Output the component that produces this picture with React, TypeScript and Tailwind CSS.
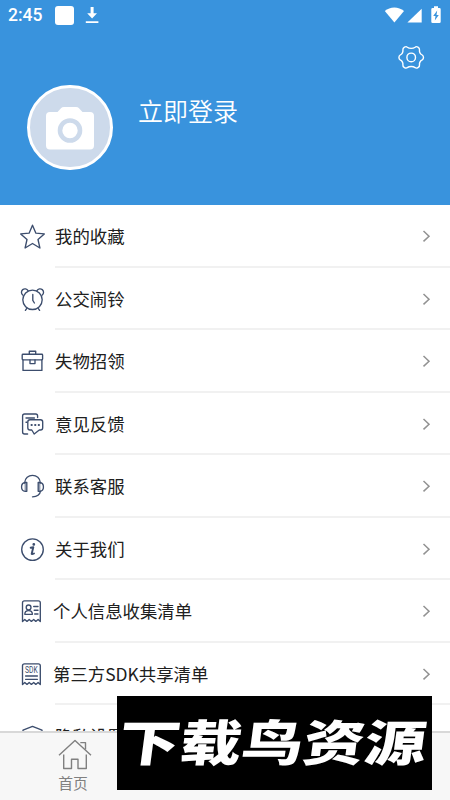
import React from 'react';

interface MenuItem {
  id: string;
  label: string;
  icon: React.ReactNode;
  tight?: boolean;
}

const StarIcon = () => (
  <path d="M12.5 1.2 L15.9 9.2 L24.3 9.9 L18 15.5 L19.9 24 L12.5 19.5 L5.1 24 L7 15.5 L0.7 9.9 L9.1 9.2 Z" />
);

const AlarmIcon = () => (
  <>
    <circle cx="12.5" cy="12.8" r="9.7" />
    <path d="M2.7 8 A3.5 3.5 0 1 1 8 3.6 M17 3.6 A3.5 3.5 0 1 1 22.3 8" />
    <path d="M12.8 7.5 V13.4 L14.4 16 M6.8 21.3 L5.4 23.4 M18.2 21.3 L19.6 23.4" />
  </>
);

const BriefcaseIcon = () => (
  <>
    <path d="M9.3 5.2 V2.2 H15.7 V5.2" />
    <rect x="2.2" y="5.2" width="20.4" height="5.6" rx="0.8" />
    <path d="M3 10.8 V21.4 H21.9 V10.8 M10 10.8 V14.6 H15 V10.8" />
  </>
);

const FeedbackIcon = () => (
  <>
    <path d="M17.6 5.6 V3.9 Q17.6 2 15.7 2 H4.6 Q2.6 2 2.6 4 V20 Q2.6 22 4.6 22 H7.6 M6 6 H14.4 M6 10.2 H7" />
    <path d="M10 7.7 H20.5 Q22.7 7.7 22.7 9.9 V15.7 Q22.7 18 20.5 18 H19.3 L14.2 22 L11.8 18 H10 Q7.8 18 7.8 15.7 V9.9 Q7.8 7.7 10 7.7 Z" />
    <path d="M11.5 12.9 H11.8 M15.1 12.9 H15.4 M18.7 12.9 H19" strokeWidth="2" />
  </>
);

const HeadsetIcon = () => (
  <>
    <path d="M4.6 9 C5 -1.2 20 -1.2 20.4 9" />
    <path d="M6.8 8.5 V17.3 H5.3 C0.3 16.8 0.3 9 5.3 8.5 Z M18.2 8.5 V17.3 H19.7 C24.7 16.8 24.7 9 19.7 8.5 Z" />
    <path d="M5.2 9 V17 M19.8 9 V17" strokeWidth="0.8" />
    <path d="M20.5 17.2 C19.9 20.8 17.2 22.8 12.5 22.8" />
  </>
);

const InfoIcon = () => (
  <>
    <circle cx="12.5" cy="12.6" r="10.8" />
    <path d="M10.7 10.7 L13.3 10.2 L11.7 16.7 Q11.7 17.6 14 16.5" strokeWidth="1.9" />
    <circle cx="13.8" cy="7.4" r="0.7" fill="#3c4d6d" />
  </>
);

const ReceiptEdge = () => (
  <path d="M2.5 22.6 V3.8 Q2.5 1.8 4.5 1.8 H18.3 Q20.3 1.8 20.3 3.8 V22.6 L18.1 20.5 L15.8 22.4 L13.7 20.5 L11.4 22.4 L9.2 20.5 L7 22.4 L4.8 20.5 Z" />
);

const PersonalListIcon = () => (
  <>
    <ReceiptEdge />
    <circle cx="8.6" cy="8.4" r="2.4" />
    <path d="M4.8 15.3 Q4.8 11.6 8.6 11.6 Q12.4 11.6 12.4 15.3 Z M13.7 7.5 H18 M14.2 11.2 H18 M14.7 15 H18" />
  </>
);

const SdkListIcon = () => (
  <>
    <ReceiptEdge />
    <text x="11.4" y="10.9" textAnchor="middle" fontSize="8.8" textLength="12.6" lengthAdjust="spacingAndGlyphs" fontFamily="Roboto" fill="#3c4d6d" stroke="none">SDK</text>
    <path d="M5.6 14 H17.4 M5.6 17.3 H17.4" />
  </>
);

const ShieldIcon = () => (
  <path d="M12.5 2.4 L22 6.2 V13 C22 18 18 21.5 12.5 24 C7 21.5 3 18 3 13 V6.2 Z" />
);

const items: MenuItem[] = [
  { id: 'favorites', label: '我的收藏', icon: <StarIcon /> },
  { id: 'alarm', label: '公交闹铃', icon: <AlarmIcon /> },
  { id: 'lost', label: '失物招领', icon: <BriefcaseIcon /> },
  { id: 'feedback', label: '意见反馈', icon: <FeedbackIcon /> },
  { id: 'service', label: '联系客服', icon: <HeadsetIcon /> },
  { id: 'about', label: '关于我们', icon: <InfoIcon /> },
  { id: 'personal', label: '个人信息收集清单', icon: <PersonalListIcon />, tight: true },
  { id: 'sdk', label: '第三方SDK共享清单', icon: <SdkListIcon />, tight: true },
  { id: 'privacy', label: '隐私设置', icon: <ShieldIcon /> },
];

function StatusBar() {
  return (
    <div className="flex h-[30px] items-center pl-[8px] pr-[8px] text-white">
      <span className="w-[47px] pt-[2px] font-['Roboto',sans-serif] text-[17.5px] font-medium leading-none">2:45</span>
      <span className="h-[19px] w-[19px] rounded-[3px] bg-white" />
      <svg className="ml-[11px]" width="14" height="18" viewBox="0 0 14 18" fill="white">
        <path d="M5.6 1 H8.6 V7.3 H12 L7.1 12.5 L2.2 7.3 H5.6 Z M0.8 15.2 H13.4 V17 H0.8 Z" />
      </svg>
      <svg className="ml-auto" width="58" height="20" viewBox="0 0 58 20" fill="white">
        <path d="M0.8 6.1 C6 1.4 14.5 1.4 20 6.1 L10.4 17.4 Z" />
        <path d="M37.7 3.7 V17.5 H23.4 Z" />
        <path d="M50 1.2 H54 V3 H55.4 Q56.7 3 56.7 4.3 V16.7 Q56.7 18 55.4 18 H48.6 Q47.3 18 47.3 16.7 V4.3 Q47.3 3 48.6 3 H50 Z" />
        <path d="M53.2 5.5 L49.2 10.9 H51.5 L50.8 15.5 L54.8 9.9 H52.5 Z" fill="#3993dd" />
      </svg>
    </div>
  );
}

function ProfileHeader() {
  return (
    <header className="h-[205px] shrink-0 bg-[#3993dd]">
      <StatusBar />
      <div className="flex h-[55px] justify-end pr-[25px] pt-[14px]">
        <svg width="28" height="28" viewBox="0 0 28 28" fill="none" stroke="white" strokeWidth="1.4" strokeLinejoin="round">
          <path d="M10.3 3.2 C12.3 4.7 16.1 4.7 18.1 3.2 C19.5 1.8 22.8 3.6 22.5 5.8 C22.2 8.2 23.4 10 25.2 11 C26.9 12 26.9 14.8 25.2 15.8 C23.4 16.8 22.2 18.6 22.5 21 C22.8 23.2 19.5 25 18.1 23.6 C16.1 22.1 12.3 22.1 10.3 23.6 C8.9 25 5.6 23.2 5.9 21 C6.2 18.6 5 16.8 3.2 15.8 C1.5 14.8 1.5 12 3.2 11 C5 10 6.2 8.2 5.9 5.8 C5.6 3.6 8.9 1.8 10.3 3.2 Z" />
          <circle cx="14.2" cy="13.4" r="4.3" />
        </svg>
      </div>
      <div className="flex pl-[27px]">
        <div className="flex h-[85px] w-[86px] items-center justify-center rounded-full border-[3px] border-white bg-[#cddaeb]">
          <svg width="50" height="46" viewBox="0 0 50 46">
            <path d="M5 7 H12.5 L16 3.2 Q17 2 19 2 H31 Q33 2 34 3.2 L37.5 7 H45 Q49 7 49 11 V40.5 Q49 44.5 45 44.5 H5 Q1 44.5 1 40.5 V11 Q1 7 5 7 Z" fill="white" />
            <circle cx="25" cy="25.5" r="10" fill="white" stroke="#cddaeb" strokeWidth="4.6" />
          </svg>
        </div>
        <span className="ml-[25px] mt-[7px] text-[25px] font-[350] leading-[36px] text-white">立即登录</span>
      </div>
    </header>
  );
}

function MenuRow({ item }: { item: MenuItem }) {
  return (
    <li className="flex h-[62.5px] shrink-0 pl-[20px]">
      <svg className="mt-[19px] shrink-0" width="25" height="25" viewBox="0 0 25 25" fill="none" stroke="#3c4d6d" strokeWidth="1.35" strokeLinecap="round" strokeLinejoin="round">
        {item.icon}
      </svg>
      <div className="ml-[10px] flex flex-1 items-center border-b-2 border-[#f1f1f1] pr-[18px] pt-[2px]">
        <span className={`text-[17.4px] leading-[26px] text-[#202020] ${item.tight ? '-ml-[2px]' : ''}`}>{item.label}</span>
        <svg className="ml-auto" width="12" height="14" viewBox="0 0 12 14" fill="none" stroke="#929292" strokeWidth="1.5">
          <path d="M3.5 2 L9 7.2 L3.5 12.4" />
        </svg>
      </div>
    </li>
  );
}

export default function App() {
  return (
    <div className="relative flex h-[800px] w-[450px] flex-col overflow-hidden bg-white font-['Noto_Sans_CJK_SC',sans-serif]">
      <ProfileHeader />
      <ul className="flex min-h-0 flex-1 flex-col overflow-hidden">
        {items.map((item) => (
          <MenuRow key={item.id} item={item} />
        ))}
      </ul>

      {/* Bottom tab bar */}
      <nav className="h-[69px] shrink-0 border-t-2 border-[#d8d8d8] bg-[#f7f7f7] pl-[58px]">
        <div className="flex w-[34px] flex-col items-center pt-[6px] text-[#808080]">
          <svg className="shrink-0" width="34" height="31" viewBox="0 0 34 31" fill="none" stroke="currentColor" strokeWidth="1.4" strokeLinejoin="round">
            <path d="M1 16.3 L17 1.5 L33 16.3" />
            <path d="M22.3 3.6 H27.5 V10.5 M5.7 15.5 V29.5 H13.5 V20.3 H20 V29.5 H28.3 V15.5" />
          </svg>
          <span className="-ml-[4px] mt-[1px] whitespace-nowrap text-[14.8px] leading-[23px]">首页</span>
        </div>
      </nav>

      {/* Banner floating over the tab bar */}
      <div className="absolute left-[117px] top-[696px] flex h-[94px] w-[315px] items-center justify-center overflow-hidden bg-black pb-[9px] pr-[4px]">
        <span className="origin-center -skew-x-6 scale-x-123 scale-y-98 whitespace-nowrap text-[50px] font-black leading-none text-white">下载鸟资源</span>
      </div>
    </div>
  );
}
